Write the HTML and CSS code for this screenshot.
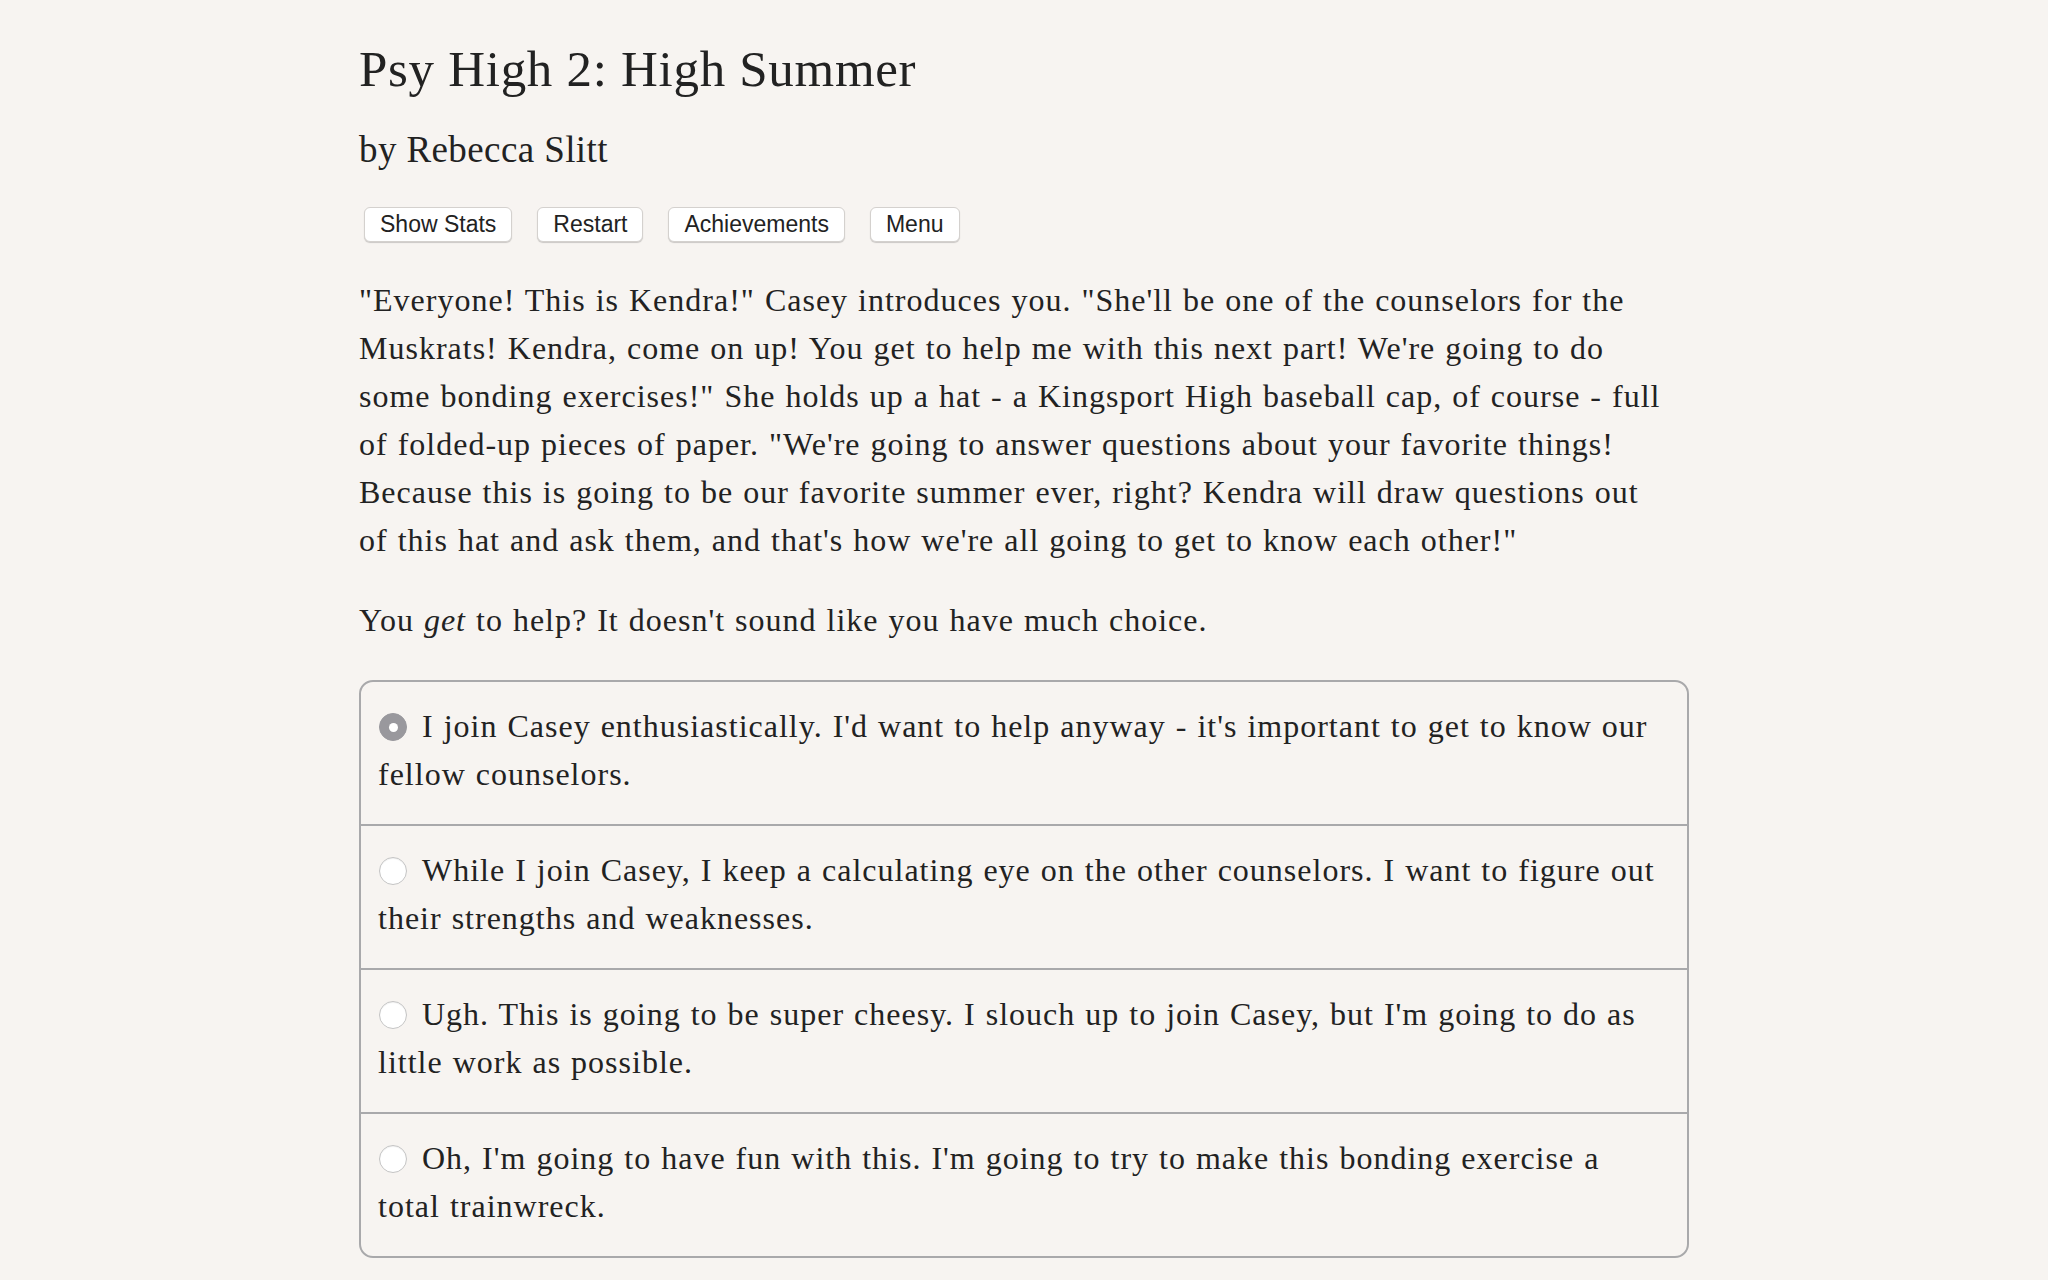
FILE: index.html
```html
<!DOCTYPE html>
<html>
<head>
<meta charset="utf-8">
<link rel="stylesheet" href="styles.css">
</head>
<body>
<div class="page">
  <h1 class="title">Psy High 2: High Summer</h1>
  <h2 class="author">by Rebecca Slitt</h2>
  <div class="buttons">
    <button class="btn">Show Stats</button>
    <button class="btn">Restart</button>
    <button class="btn">Achievements</button>
    <button class="btn">Menu</button>
  </div>
  <p class="text">"Everyone! This is Kendra!" Casey introduces you. "She'll be one of the counselors for the Muskrats! Kendra, come on up! You get to help me with this next part! We're going to do some bonding exercises!" She holds up a hat - a Kingsport High baseball cap, of course - full of folded-up pieces of paper. "We're going to answer questions about your favorite things! Because this is going to be our favorite summer ever, right? Kendra will draw questions out of this hat and ask them, and that's how we're all going to get to know each other!"</p>
  <p class="text second">You <i>get</i> to help? It doesn't sound like you have much choice.</p>
  <div class="choices">
    <div class="choice"><span class="radio checked"></span>I join Casey enthusiastically. I'd want to help anyway - it's important to get to know our fellow counselors.</div>
    <div class="choice"><span class="radio"></span>While I join Casey, I keep a calculating eye on the other counselors. I want to figure out their strengths and weaknesses.</div>
    <div class="choice"><span class="radio"></span>Ugh. This is going to be super cheesy. I slouch up to join Casey, but I'm going to do as little work as possible.</div>
    <div class="choice"><span class="radio"></span>Oh, I'm going to have fun with this. I'm going to try to make this bonding exercise a total trainwreck.</div>
  </div>
</div>
</body>
</html>
```
FILE: styles.css
```css
html, body {
  margin: 0;
  padding: 0;
  background: #f7f4f1;
}
body {
  color: #222222;
  font-family: "Liberation Serif", "Times New Roman", serif;
}
.page {
  width: 1330px;
  margin: 0 auto;
  padding-top: 39px;
}
.title {
  margin: 0;
  font-weight: normal;
  font-size: 51px;
  line-height: 60px;
  letter-spacing: 0.7px;
}
.author {
  margin: 29px 0 0 0;
  font-weight: normal;
  font-size: 37px;
  line-height: 43px;
  letter-spacing: 0.4px;
}
.buttons {
  margin-top: 36px;
  display: flex;
  gap: 25px;
  padding-left: 5px;
}
.btn {
  height: 35px;
  padding: 0 15px;
  background: #ffffff;
  border: 1px solid #d4d1ce;
  border-radius: 6px;
  box-shadow: 0 1px 1px rgba(0,0,0,0.18);
  font-family: "Liberation Sans", Arial, sans-serif;
  font-size: 23px;
  color: #222222;
}
.text {
  margin: 34px 0 0 0;
  max-width: 1316px;
  font-size: 32px;
  line-height: 48px;
  letter-spacing: 1px;
  word-spacing: 1px;
}
.text.second {
  margin-top: 32px;
}
.choices {
  margin-top: 36px;
  border: 2px solid #a9a9ab;
  border-radius: 14px;
  overflow: hidden;
}
.choice {
  padding: 20px 24px 26px 17px;
  font-size: 32px;
  line-height: 48px;
  letter-spacing: 1px;
  word-spacing: 1px;
}
.choice + .choice {
  border-top: 2px solid #a9a9ab;
}
.radio {
  display: inline-block;
  box-sizing: border-box;
  width: 28px;
  height: 28px;
  margin: 0 15px -4px 1px;
  border-radius: 50%;
  background: #ffffff;
  border: 1px solid #c4c4c4;
  box-shadow: inset 0 1px 1px rgba(0,0,0,0.06);
  position: relative;
}
.radio.checked {
  background: #99989d;
  border-color: #99989d;
  box-shadow: none;
}
.radio.checked::after {
  content: "";
  position: absolute;
  left: 50%;
  top: 50%;
  width: 9px;
  height: 9px;
  margin: -4.5px 0 0 -4.5px;
  border-radius: 50%;
  background: #ffffff;
}
```
